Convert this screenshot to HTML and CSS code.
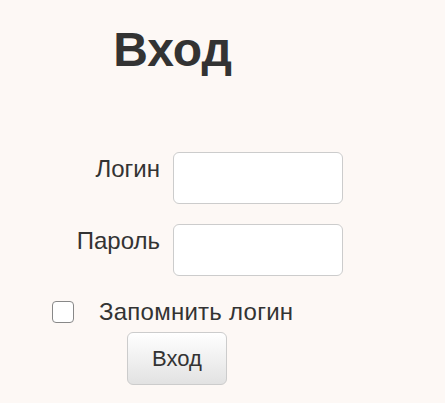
FILE: index.html
```html
<!DOCTYPE html>
<html lang="ru">
<head>
    <meta charset="UTF-8">
    <meta name="viewport" content="width=device-width, initial-scale=1.0">
    <title>Вход</title>
    <link rel="stylesheet" href="styles.css">
</head>
<body>
<div class="login">
    <h1>Вход</h1>
    <form action="login" method="POST">
        <div class="fields">
            <label for="login">Логин</label>
            <input type="text" id="login" name="login">
            <label for="password">Пароль</label>
            <input type="password" id="password" name="password">
        </div>
        <div class="remember">
            <input type="checkbox" id="remember" name="remember">
            <label for="remember">Запомнить логин</label>
        </div>
        <button type="submit" class="btn">Вход</button>
    </form>
</div>
</body>
</html>
```

FILE: styles.css
```css
body{
    margin: 0;
    padding: 0 8px;
    font-family: "Liberation Sans", Arial, sans-serif;
    color: #333;
    background-color: #fdf8f5;
}
.login{
    width: 335px;
}
h1{
    margin: 23px 0 0;
    padding-right: 6px;
    font-size: 48px;
    line-height: 54px;
    text-align: center;
}
form{
    margin-top: 75px;
}
.fields{
    display: grid;
    grid-template-columns: 152px 170px;
    column-gap: 13px;
    row-gap: 20px;
    align-items: start;
}
.fields label{
    text-align: right;
    font-size: 24px;
    line-height: 28px;
    padding-top: 3px;
}
.fields input{
    box-sizing: border-box;
    width: 170px;
    height: 52px;
    margin: 0;
    border: 1px solid #ccc;
    border-radius: 6px;
    background: #fff;
    font-size: 21px;
    padding: 6px 12px;
}
.remember{
    display: flex;
    align-items: center;
    margin-top: 22px;
    font-size: 24px;
    line-height: 28px;
    letter-spacing: 0.25px;
}
.remember input{
    appearance: none;
    box-sizing: border-box;
    width: 22px;
    height: 22px;
    margin: 0 25px 0 44px;
    border: 1px solid #888;
    border-radius: 4px;
    background: #fff;
}
.btn{
    display: block;
    box-sizing: border-box;
    width: 100px;
    height: 53px;
    margin: 6px 0 0 119px;
    border: 1px solid #ccc;
    border-radius: 6px;
    background: linear-gradient(#fff, #e2e2e2);
    color: #333;
    font-family: "Liberation Sans", Arial, sans-serif;
    font-size: 22px;
}
```
